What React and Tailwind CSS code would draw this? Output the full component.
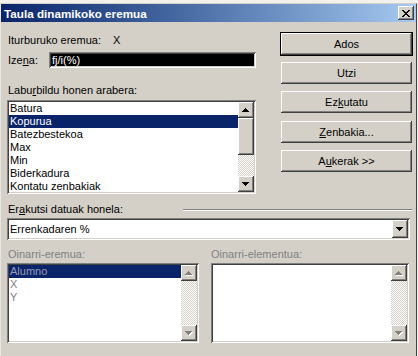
import React from "react";

const raised =
  "bg-[#d4d0c8] shadow-[inset_-1px_-1px_#404040,inset_1px_1px_#fff,inset_-2px_-2px_#808080,inset_2px_2px_#d4d0c8]";
const sunken =
  "shadow-[inset_1px_1px_#808080,inset_-1px_-1px_#fff,inset_2px_2px_#404040,inset_-2px_-2px_#d4d0c8]";
const checker =
  "bg-[image:repeating-conic-gradient(#fff_0_25%,#d4d0c8_0_50%)] bg-[length:2px_2px]";

function Arrow({ up, disabled }) {
  const rows = up
    ? [[3, 0, 1], [2, 1, 3], [1, 2, 5], [0, 3, 7]]
    : [[0, 0, 7], [1, 1, 5], [2, 2, 3], [3, 3, 1]];
  return (
    <svg width="8" height="5" viewBox="0 0 8 5" shapeRendering="crispEdges">
      {disabled &&
        rows.map(([x, y, w]) => (
          <rect key={"s" + y} x={x + 1} y={y + 1} width={w} height="1" fill="#fff" />
        ))}
      {rows.map(([x, y, w]) => (
        <rect key={y} x={x} y={y} width={w} height="1" fill={disabled ? "#808080" : "#000"} />
      ))}
    </svg>
  );
}

function ScrollBtn({ up, disabled }) {
  return (
    <div className={`w-[16px] h-[16px] shrink-0 flex items-center justify-center ${raised}`}>
      <Arrow up={up} disabled={disabled} />
    </div>
  );
}

function Scrollbar({ thumb, disabled }) {
  return (
    <div className="w-[16px] h-full flex flex-col">
      <ScrollBtn up disabled={disabled} />
      {thumb ? (
        <>
          <div className={`h-[37px] shrink-0 ${raised}`} />
          <div className={`flex-1 ${checker}`} />
        </>
      ) : (
        <div className={`flex-1 ${checker}`} />
      )}
      <ScrollBtn disabled={disabled} />
    </div>
  );
}

function Button({ children, primary }) {
  return (
    <div
      className={`h-[22px] flex items-center justify-center ${raised} ${
        primary ? "outline outline-1 outline-black" : ""
      }`}
    >
      <span>{children}</span>
    </div>
  );
}

const summary = [
  "Batura",
  "Kopurua",
  "Batezbestekoa",
  "Max",
  "Min",
  "Biderkadura",
  "Kontatu zenbakiak",
];

export default function App() {
  return (
    <div className="w-[418px] h-[356px] overflow-hidden bg-[#f2f1ec] font-['Liberation_Sans',Arial,sans-serif] text-[11px] leading-[13px] text-black">
      <div className="mt-[3px] w-[417px] h-[353px] bg-[#d4d0c8] border-t border-l border-r border-t-[#d4d0c8] border-l-[#e8e6e0] border-r-[#404040] flex flex-col">
        {/* title bar */}
        <div className="h-[18px] shrink-0 flex items-center justify-between bg-gradient-to-r from-[#0a246a] to-[#a6caf0] pl-[3px] pr-[2px]">
          <span className="text-white font-bold text-[11.7px]">Taula dinamikoko eremua</span>
          <div className={`w-[16px] h-[14px] flex items-center justify-center ${raised}`}>
            <svg width="8" height="7" viewBox="0 0 8 7" shapeRendering="crispEdges">
              <path d="M0 0h2v1h-2zM6 0h2v1h-2zM1 1h2v1h-2zM5 1h2v1h-2zM2 2h4v1h-4zM3 3h2v1h-2zM2 4h4v1h-4zM1 5h2v1h-2zM5 5h2v1h-2zM0 6h2v1h-2zM6 6h2v1h-2z" fill="#000" />
            </svg>
          </div>
        </div>

        <div className="pl-[6px] pr-[4px] flex flex-col">
          <div className="flex gap-[25px]">
            {/* left column */}
            <div className="w-[249px] flex flex-col">
              <div className="mt-[12px] h-[13px] flex pl-[1px]">
                <span className="w-[105px]">Iturburuko eremua:</span>
                <span>X</span>
              </div>
              <div className="mt-[5px] h-[16px] flex items-center">
                <span className="w-[42px] pl-[1px]">
                  Ize<u>n</u>a:
                </span>
                <div className={`flex-1 h-full bg-black ${sunken} pl-[3px] flex items-center`}>
                  <span className="text-white">fj/i(%)</span>
                </div>
              </div>
              <div className="mt-[16px] h-[13px] pl-[1px]">
                Labu<u>r</u>bildu honen arabera:
              </div>
              <div className={`mt-[3px] h-[94px] bg-white ${sunken} p-[2px] flex`}>
                <div className="flex-1 flex flex-col">
                  {summary.map((s, i) => (
                    <div
                      key={s}
                      className={`h-[13px] pl-[1px] ${i === 1 ? "bg-[#0a246a] text-white" : ""}`}
                    >
                      {s}
                    </div>
                  ))}
                </div>
                <Scrollbar thumb />
              </div>
            </div>

            {/* right column */}
            <div className="w-[131px] flex flex-col gap-[7px] mt-[11px]">
              <Button primary>Ados</Button>
              <Button>Utzi</Button>
              <Button>
                Ez<u>k</u>utatu
              </Button>
              <div className="mt-[1px]">
                <Button>
                  <u>Z</u>enbakia...
                </Button>
              </div>
              <Button>
                A<u>u</u>kerak &gt;&gt;
              </Button>
            </div>
          </div>

          {/* show data as */}
          <div className="mt-[9px] h-[13px] flex items-center">
            <span className="w-[176px] pl-[1px]">
              Er<u>a</u>kutsi datuak honela:
            </span>
            <div className="flex-1 border-t border-t-[#808080] border-b border-b-white" />
          </div>
          <div className={`mt-[2px] mr-[2px] h-[22px] bg-white ${sunken} p-[2px] flex items-center`}>
            <span className="flex-1 pl-[1px]">Errenkadaren %</span>
            <div className={`w-[16px] h-[18px] flex items-center justify-center ${raised}`}>
              <Arrow />
            </div>
          </div>

          {/* base fields */}
          <div className="mt-[8px] mr-[3px] flex gap-[12px] text-[#808080]">
            <div className="w-[192px] flex flex-col">
              <div className="h-[13px] pl-[1px]">Oinarri-eremua:</div>
              <div className={`mt-[2px] h-[80px] bg-white ${sunken} p-[2px] flex`}>
                <div className="flex-1 flex flex-col">
                  <div className="h-[13px] pl-[1px] bg-[#0a246a] text-[#9a9ab8]">Alumno</div>
                  <div className="h-[13px] pl-[1px]">X</div>
                  <div className="h-[13px] pl-[1px]">Y</div>
                </div>
                <Scrollbar disabled />
              </div>
            </div>
            <div className="flex-1 flex flex-col">
              <div className="h-[13px]">Oinarri-elementua:</div>
              <div className={`mt-[2px] h-[80px] bg-white ${sunken} p-[2px] flex`}>
                <div className="flex-1" />
                <Scrollbar disabled />
              </div>
            </div>
          </div>
        </div>
      </div>
    </div>
  );
}
